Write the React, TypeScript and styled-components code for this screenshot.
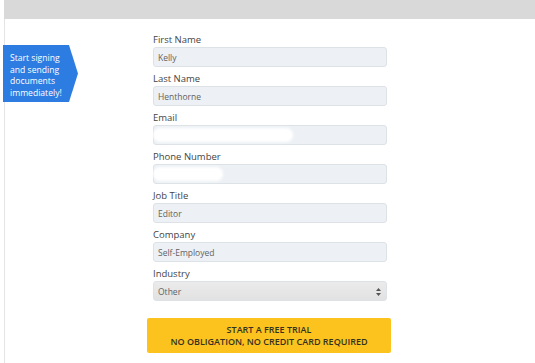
import styled, { createGlobalStyle } from "styled-components";

const GlobalStyle = createGlobalStyle`
html, body {
  margin: 0;
  padding: 0;
  background: #ffffff;
}
body {
  font-family: "Open Sans", "Liberation Sans", sans-serif;
}
`;

const Page = styled.div`
width: 535px;
height: 363px;
overflow: hidden;
padding-left: 4px;
box-sizing: border-box;
`;

const TopBar = styled.div`
height: 19px;
background-color: #d9d9d9;
`;

const Body = styled.div`
display: flex;
align-items: flex-start;
height: 344px;
border-left: 1px solid #e4e4e4;
padding-top: 12px;
box-sizing: border-box;
`;

const Callout = styled.div`
flex: none;
width: 75px;
height: 57px;
margin-top: 14px;
margin-left: -2px;
padding: 8px 0 0 7px;
box-sizing: border-box;
background-color: #2d7ce2;
clip-path: polygon(0 0, 66px 0, 75px 50%, 66px 100%, 0 100%);
color: #ffffff;
font-size: 8.6px;
line-height: 11.5px;
`;

const Form = styled.form`
flex: none;
display: flex;
flex-direction: column;
width: 234px;
margin-left: 75px;
`;

const Field = styled.div`
display: flex;
flex-direction: column;
margin-bottom: 3px;
`;

const Label = styled.label`
height: 16px;
padding-top: 2px;
box-sizing: border-box;
font-size: 9.5px;
line-height: 13px;
color: #444444;
`;

const Input = styled.div<{ $select?: boolean }>`
position: relative;
display: flex;
align-items: center;
height: 20px;
padding: 0 4px;
box-sizing: border-box;
border: 1px solid #dde2e7;
border-radius: 3px;
background: ${({ $select }) =>
  $select ? "linear-gradient(#ebebeb, #e2e2e2)" : "#edf1f5"};
font-size: 8.5px;
color: #626262;
`;

const Redacted = styled.span<{ $w: number }>`
display: block;
width: ${({ $w }) => $w}px;
height: 10px;
margin-left: -3px;
border-radius: 5px;
background: #ffffff;
box-shadow: 0 0 3px 2px #ffffff;
`;

const Arrows = styled.svg`
position: absolute;
right: 5px;
top: 6px;
`;

const TrialButton = styled.button`
width: 244px;
height: 35px;
margin: 14px 0 0 -6px;
padding: 0;
border: none;
border-radius: 2px;
background-color: #fcc31f;
font-family: "Open Sans", "Liberation Sans", sans-serif;
font-size: 9px;
font-weight: 600;
line-height: 12px;
color: #35311f;
`;

const fields = [
  { label: "First Name", value: "Kelly" },
  { label: "Last Name", value: "Henthorne" },
  { label: "Email", redact: 136 },
  { label: "Phone Number", redact: 66 },
  { label: "Job Title", value: "Editor" },
  { label: "Company", value: "Self-Employed" },
];

const App = () => {
  return (
    <>
      <GlobalStyle />
      <Page>
        <TopBar />
        <Body>
          <Callout>
            Start signing
            <br />
            and sending
            <br />
            documents
            <br />
            immediately!
          </Callout>
          <Form>
            {fields.map((f) => (
              <Field key={f.label}>
                <Label>{f.label}</Label>
                <Input>
                  {f.redact ? <Redacted $w={f.redact} /> : f.value}
                </Input>
              </Field>
            ))}
            <Field>
              <Label>Industry</Label>
              <Input $select>
                Other
                <Arrows width="5" height="8" viewBox="0 0 5 8">
                  <path d="M2.5 0 L5 3 L0 3 Z M2.5 8 L5 5 L0 5 Z" fill="#555555" />
                </Arrows>
              </Input>
            </Field>
            <TrialButton type="button">
              START A FREE TRIAL
              <br />
              NO OBLIGATION, NO CREDIT CARD REQUIRED
            </TrialButton>
          </Form>
        </Body>
      </Page>
    </>
  );
};

export default App;
